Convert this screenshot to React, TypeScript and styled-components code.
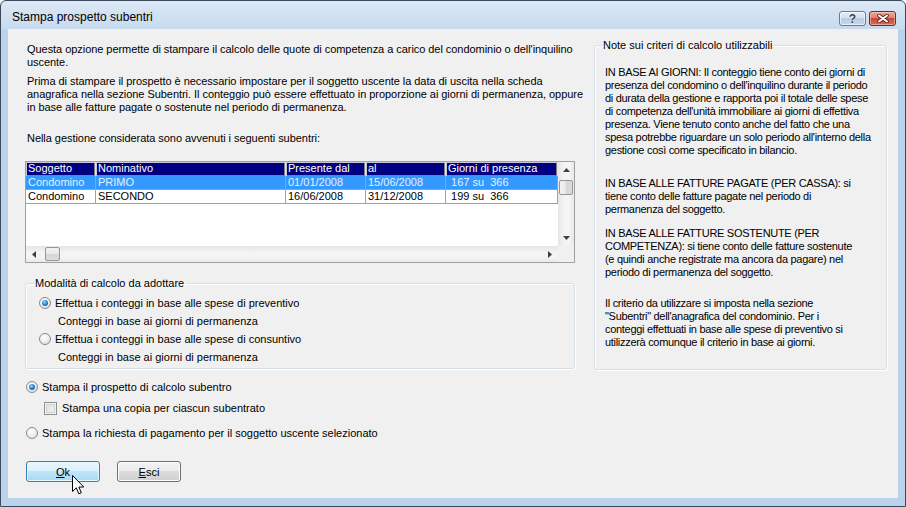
import styled, { createGlobalStyle, css } from "styled-components";

const GlobalStyle = createGlobalStyle`
  html, body {
    margin: 0;
    padding: 0;
    background: #ffffff;
  }
  body {
    font-family: "Liberation Sans", Arial, sans-serif;
    font-size: 11px;
    color: #000;
  }
`

const Window = styled.div`
  position: relative;
  width: 906px;
  height: 507px;
  box-sizing: border-box;
  border: 1px solid #3a4a5c;
  border-radius: 6px 6px 0 0;
  background: linear-gradient(#dce8f5 0, #c7daee 28px, #bad2ea 29px, #bad2ea 100%);
  display: flex;
  flex-direction: column;
  overflow: hidden;
`
const TitleBar = styled.div`
  height: 28px;
  display: flex;
  align-items: flex-start;
  padding: 0 9px 0 11px;
`
const Title = styled.div`
  flex: 1;
  font-family: "Liberation Sans", Arial, sans-serif;
  font-size: 12px;
  line-height: 14px;
  margin-top: 9px;
`
const CaptionButtons = styled.div`
  display: flex;
  gap: 3px;
  margin-top: 10px;
`
const CaptionButton = styled.div<{ $close?: boolean }>`
  width: 27px;
  height: 15px;
  box-sizing: border-box;
  border: 1px solid #6a7d94;
  border-radius: 3px;
  display: flex;
  align-items: center;
  justify-content: center;
  font-family: "Liberation Sans", Arial, sans-serif;
  font-weight: bold;
  font-size: 12px;
  color: #2d4260;
  text-shadow: 0 0 1px #fff, 0 0 1px #fff;
  background: linear-gradient(#e6eef7 0%, #d3e0ee 45%, #b9cce2 50%, #c8d8ea 100%);
  box-shadow: inset 0 0 0 1px rgba(255, 255, 255, 0.6);
  ${({ $close }) => $close && css`
    border-color: #6d2b24;
    background: linear-gradient(#e9a99c 0%, #d98373 45%, #c5483a 50%, #d3705f 100%);
    box-shadow: inset 0 0 0 1px rgba(255, 220, 210, 0.5);
  `}
`

const Client = styled.div`
  flex: 1;
  margin: 0 7px 8px 7px;
  background: #f0f0f0;
  display: grid;
  grid-template-columns: 550px 293px;
  column-gap: 19px;
  padding: 0 11px 0 17px;
`
const LeftColumn = styled.div`
  padding-top: 14px;
  display: flex;
  flex-direction: column;
`
const RightColumn = styled.div`
  padding-top: 10px;
`
const Label = styled.p<{ $gap?: number }>`
  margin: ${({ $gap }) => $gap ?? 0}px 0 0 0;
  padding-left: 2px;
  line-height: 13px;
  letter-spacing: -0.05px;
  white-space: nowrap;
`

const GridBox = styled.div`
  margin-top: 16px;
  border: 1px solid #a0a0a0;
  background: #fff;
  display: grid;
  grid-template-columns: 1fr 16px;
  grid-template-rows: 84px 16px;
`
const GridBody = styled.div`
  overflow: hidden;
`
const GridRow = styled.div<{ $selected?: boolean }>`
  display: grid;
  grid-template-columns: 70px 190px 80px 80px 112px;
  height: 14px;
  line-height: 13px;
  background: ${({ $selected }) => ($selected ? "#3399ff" : "#fff")};
  color: ${({ $selected }) => ($selected ? "#e4f0ff" : "#000")};
`
const Cell = styled.div`
  padding-left: 2px;
  white-space: pre;
  overflow: hidden;
  border-right: 1px solid #a0a0a0;
  border-bottom: 1px solid #a0a0a0;
`
const HeadCell = styled.div`
  padding-left: 2px;
  white-space: pre;
  overflow: hidden;
  background: #000080;
  color: #fff;
  box-shadow: inset 1px 1px 0 #c8c8d8, inset -1px -1px 0 #808080;
  border-right: 1px solid #e0e0e0;
`

const VScroll = styled.div`
  display: flex;
  flex-direction: column;
  background: linear-gradient(90deg, #e6e6e6, #f4f4f4 40%, #f4f4f4 70%, #e9e9e9);
`
const HScroll = styled.div`
  display: flex;
  background: linear-gradient(#e6e6e6, #f4f4f4 40%, #f4f4f4 70%, #e9e9e9);
`
const Corner = styled.div`
  background: #f0f0f0;
`
const Arrow = styled.div`
  width: 16px;
  height: 16px;
  flex: none;
  display: flex;
  align-items: center;
  justify-content: center;
`
const Spacer = styled.div`
  flex: 1;
`
const Thumb = styled.div<{ $vertical?: boolean }>`
  flex: none;
  box-sizing: border-box;
  border: 1px solid #979797;
  border-radius: 2px;
  ${({ $vertical }) => $vertical
    ? css`
        height: 15px;
        margin: 2px 1px 0 1px;
        background: linear-gradient(90deg, #f3f3f3, #e8e8e8 50%, #d6d6d6 51%, #dcdcdc);
      `
    : css`
        width: 15px;
        margin: 1px 0 1px 3px;
        background: linear-gradient(#f3f3f3, #e8e8e8 50%, #d6d6d6 51%, #dcdcdc);
      `}
`

const GroupBox = styled.fieldset<{ $height?: number }>`
  margin: 0;
  min-width: 0;
  box-sizing: border-box;
  border: 1px solid #d5dfe5;
  border-radius: 3px;
  box-shadow: inset 1px 1px 0 #fff, 1px 1px 0 #fff;
  ${({ $height }) => $height && css`height: ${$height}px;`}
`
const Legend = styled.legend<{ $indent: number }>`
  margin-left: ${({ $indent }) => $indent}px;
  padding: 0 2px 0 1px;
  line-height: 13px;
`
const ModeGroup = styled(GroupBox)`
  margin-top: 14px;
  padding: 4px 0 2px 13px;
`
const NotesGroup = styled(GroupBox)`
  padding: 14px 0 0 10px;
`
const NoteText = styled.p<{ $gap?: number }>`
  margin: ${({ $gap }) => $gap ?? 0}px 0 0 0;
  line-height: 13px;
  letter-spacing: -0.3px;
  white-space: nowrap;
`

const OptionRow = styled.label<{ $indent?: number; $gap?: number }>`
  display: flex;
  align-items: center;
  height: 18px;
  padding-left: ${({ $indent }) => $indent ?? 0}px;
  margin-top: ${({ $gap }) => $gap ?? 0}px;
  white-space: nowrap;
`
const SubText = styled.div`
  height: 18px;
  line-height: 18px;
  padding-left: 19px;
  white-space: nowrap;
`
const Radio = styled.span<{ $checked?: boolean }>`
  width: 12px;
  height: 12px;
  box-sizing: border-box;
  border-radius: 50%;
  border: 1px solid #8a8a8a;
  margin-right: 4px;
  background: radial-gradient(circle at 40% 35%, #ffffff 0%, #f0f0f0 45%, #d2d2d2 100%);
  display: flex;
  align-items: center;
  justify-content: center;
  &::after {
    content: "";
    width: 6px;
    height: 6px;
    border-radius: 50%;
    display: ${({ $checked }) => ($checked ? "block" : "none")};
    background: radial-gradient(circle at 40% 35%, #9ad7ff 0%, #2a8ad4 45%, #0a3d84 100%);
  }
`
const Check = styled.span`
  width: 13px;
  height: 13px;
  box-sizing: border-box;
  border: 1px solid #8e8f8f;
  margin-right: 5px;
  background: linear-gradient(135deg, #dcdcdc, #f6f6f6);
  box-shadow: inset 0 0 0 1px #f4f4f4, inset 0 0 0 2px #cfcfcf;
`

const ButtonRow = styled.div`
  display: flex;
  gap: 17px;
  margin-top: 19px;
  padding-left: 1px;
`
const Button = styled.div<{ $focused?: boolean; $width: number }>`
  width: ${({ $width }) => $width}px;
  height: 21px;
  box-sizing: border-box;
  border-radius: 3px;
  display: flex;
  align-items: center;
  justify-content: center;
  border: 1px solid #707070;
  background: linear-gradient(#f2f2f2 0%, #ebebeb 49%, #dddddd 50%, #cfcfcf 100%);
  box-shadow: inset 0 0 0 1px #fcfcfc;
  ${({ $focused }) => $focused && css`
    border-color: #3c7fb1;
    background: linear-gradient(#eaf6fd 0%, #d9f0fc 49%, #bee6fd 50%, #a7d9f5 100%);
    box-shadow: inset 0 0 0 1px #e8f6fd;
  `}
`
const Cursor = styled.svg`
  position: absolute;
  left: 71px;
  top: 474px;
`

const columns = ["Soggetto", "Nominativo", "Presente dal", "al", "Giorni di presenza"]
const rows = [
  ["Condomino", "PRIMO", "01/01/2008", "15/06/2008", " 167 su  366"],
  ["Condomino", "SECONDO", "16/06/2008", "31/12/2008", " 199 su  366"],
]

function Tri({ dir }: { dir: "up" | "down" | "left" | "right" }) {
  const pts = {
    up: "0,4 3.5,0 7,4",
    down: "0,0 3.5,4 7,0",
    left: "4,0 0,3.5 4,7",
    right: "0,0 4,3.5 0,7",
  }[dir]
  const vertical = dir === "up" || dir === "down"
  return (
    <svg width={vertical ? 7 : 4} height={vertical ? 4 : 7}>
      <polygon points={pts} fill="#404040" />
    </svg>
  )
}

export default function App() {
  return (
    <>
      <GlobalStyle />
      <Window>
        <TitleBar>
          <Title>Stampa prospetto subentri</Title>
          <CaptionButtons>
            <CaptionButton>?</CaptionButton>
            <CaptionButton $close>
              <svg width="12" height="9" viewBox="0 0 12 9">
                <path d="M2 1.5 L10 7.5 M10 1.5 L2 7.5" stroke="#5a2018" strokeWidth="3.6" strokeLinecap="round" />
                <path d="M2 1.5 L10 7.5 M10 1.5 L2 7.5" stroke="#ffffff" strokeWidth="2" strokeLinecap="round" />
              </svg>
            </CaptionButton>
          </CaptionButtons>
        </TitleBar>

        <Client>
          <LeftColumn>
            <Label>
              Questa opzione permette di stampare il calcolo delle quote di competenza a carico del condominio o dell'inquilino<br />
              uscente.
            </Label>
            <Label $gap={6}>
              Prima di stampare il prospetto è necessario impostare per il soggetto uscente la data di uscita nella scheda<br />
              anagrafica nella sezione Subentri. Il conteggio può essere effettuato in proporzione ai giorni di permanenza, oppure<br />
              in base alle fatture pagate o sostenute nel periodo di permanenza.
            </Label>
            <Label $gap={18}>Nella gestione considerata sono avvenuti i seguenti subentri:</Label>

            <GridBox>
              <GridBody>
                <GridRow>
                  {columns.map((c) => <HeadCell key={c}>{c}</HeadCell>)}
                </GridRow>
                {rows.map((r, i) => (
                  <GridRow key={i} $selected={i === 0}>
                    {r.map((v, j) => <Cell key={j}>{v}</Cell>)}
                  </GridRow>
                ))}
              </GridBody>
              <VScroll>
                <Arrow><Tri dir="up" /></Arrow>
                <Thumb $vertical />
                <Spacer />
                <Arrow><Tri dir="down" /></Arrow>
              </VScroll>
              <HScroll>
                <Arrow><Tri dir="left" /></Arrow>
                <Thumb />
                <Spacer />
                <Arrow><Tri dir="right" /></Arrow>
              </HScroll>
              <Corner />
            </GridBox>

            <ModeGroup>
              <Legend $indent={-5}>Modalità di calcolo da adottare</Legend>
              <OptionRow><Radio $checked />Effettua i conteggi in base alle spese di preventivo</OptionRow>
              <SubText>Conteggi in base ai giorni di permanenza</SubText>
              <OptionRow><Radio />Effettua i conteggi in base alle spese di consuntivo</OptionRow>
              <SubText>Conteggi in base ai giorni di permanenza</SubText>
            </ModeGroup>

            <OptionRow $indent={1} $gap={9}><Radio $checked />Stampa il prospetto di calcolo subentro</OptionRow>
            <OptionRow $indent={19} $gap={3}><Check />Stampa una copia per ciascun subentrato</OptionRow>
            <OptionRow $indent={1} $gap={7}><Radio />Stampa la richiesta di pagamento per il soggetto uscente selezionato</OptionRow>

            <ButtonRow>
              <Button $focused $width={74}><span><u>O</u>k</span></Button>
              <Button $width={64}><span><u>E</u>sci</span></Button>
            </ButtonRow>
          </LeftColumn>

          <RightColumn>
            <NotesGroup $height={331}>
              <Legend $indent={-3}>Note sui criteri di calcolo utilizzabili</Legend>
              <NoteText>
                IN BASE AI GIORNI: Il conteggio tiene conto dei giorni di<br />
                presenza del condomino o dell'inquilino durante il periodo<br />
                di durata della gestione e rapporta poi il totale delle spese<br />
                di competenza dell'unità immobiliare ai giorni di effettiva<br />
                presenza. Viene tenuto conto anche del fatto che una<br />
                spesa potrebbe riguardare un solo periodo all'interno della<br />
                gestione così come specificato in bilancio.
              </NoteText>
              <NoteText $gap={20}>
                IN BASE ALLE FATTURE PAGATE (PER CASSA): si<br />
                tiene conto delle fatture pagate nel periodo di<br />
                permanenza del soggetto.
              </NoteText>
              <NoteText $gap={11}>
                IN BASE ALLE FATTURE SOSTENUTE (PER<br />
                COMPETENZA): si tiene conto delle fatture sostenute<br />
                (e quindi anche registrate ma ancora da pagare) nel<br />
                periodo di permanenza del soggetto.
              </NoteText>
              <NoteText $gap={18}>
                Il criterio da utilizzare si imposta nella sezione<br />
                "Subentri" dell'anagrafica del condominio. Per i<br />
                conteggi effettuati in base alle spese di preventivo si<br />
                utilizzerà comunque il criterio in base ai giorni.
              </NoteText>
            </NotesGroup>
          </RightColumn>
        </Client>

        <Cursor width="13" height="21" viewBox="0 0 13 21">
          <path d="M0.5 0.5 L0.5 16.5 L4.3 12.8 L6.8 18.8 L9.3 17.8 L6.9 12 L11.8 12 Z" fill="#fff" stroke="#000" strokeWidth="1" strokeLinejoin="miter" />
        </Cursor>
      </Window>
    </>
  )
}
